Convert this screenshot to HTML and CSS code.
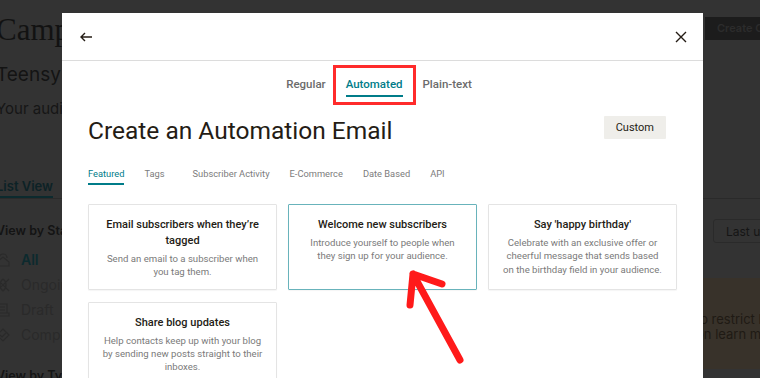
FILE: index.html
```html
<!DOCTYPE html>
<html lang="en">
<head>
    <meta charset="UTF-8">
    <meta name="viewport" content="width=device-width, initial-scale=1.0">
    <title>Campaigns</title>
    <link rel="stylesheet" href="styles.css">
</head>
<body>
    <div class="page">
        <header class="page-head">
            <h1>Campaigns</h1>
            <a class="btn-dark">Create Campaign</a>
        </header>
        <p class="org">Teensy Inc</p>
        <p class="audience">Your audience has 1 contact.</p>
        <nav class="views">
            <span class="view active">List View</span>
            <span class="view">Calendar View</span>
        </nav>
        <div class="content">
            <aside class="sidebar">
                <h4>View by Status</h4>
                <ul class="status-list">
                    <li class="active">
                        <svg width="14" height="14" viewBox="0 0 14 14"><path d="M1 9 L7 4 L13 9 V13 H1 Z M3 5 A4 4 0 0 1 11 5" fill="none" stroke="currentColor" stroke-width="1.2"/></svg>
                        All
                    </li>
                    <li>
                        <svg width="14" height="14" viewBox="0 0 14 14"><path d="M1 1 C5 5 9 9 13 13 M13 1 C9 5 5 9 1 13 M7 1 C11 4 11 10 7 13 C3 10 3 4 7 1" fill="none" stroke="currentColor" stroke-width="1.2"/></svg>
                        Ongoing
                    </li>
                    <li>
                        <svg width="14" height="14" viewBox="0 0 14 14"><path d="M2 1 H11 V10 M4 4 H9 M4 7 H9 M1 10 H13 V13 H1 Z" fill="none" stroke="currentColor" stroke-width="1.2"/></svg>
                        Draft
                    </li>
                    <li>
                        <svg width="14" height="14" viewBox="0 0 14 14"><path d="M7 1 L13 7 L7 13 L1 7 Z M4 7 L6 9 L10 5" fill="none" stroke="currentColor" stroke-width="1.2"/></svg>
                        Complete
                    </li>
                </ul>
                <h4>View by Type</h4>
            </aside>
            <main class="list">
                <div class="toolbar">
                    <button class="btn-outline">Last updated</button>
                </div>
                <div class="notice">
                    <p>to restrict how campaigns are shown,</p>
                    <p>on learn more about filters.</p>
                </div>
            </main>
        </div>
    </div>

    <div class="modal">
        <div class="modal-head">
            <svg class="icon" width="14" height="12" viewBox="0 0 14 12">
                <path d="M2 6 H13 M6 2 L2 6 L6 10" fill="none" stroke="#241c15" stroke-width="1.4"/>
            </svg>
            <svg class="icon" width="12" height="12" viewBox="0 0 12 12">
                <path d="M1 1 L11 11 M11 1 L1 11" fill="none" stroke="#241c15" stroke-width="1.4"/>
            </svg>
        </div>
        <div class="modal-body">
            <div class="mode-tabs">
                <span class="mode-tab">Regular</span>
                <span class="mode-tab active marked">Automated</span>
                <span class="mode-tab">Plain-text</span>
            </div>
            <div class="title-row">
                <h2>Create an Automation Email</h2>
                <button class="btn-custom">Custom</button>
            </div>
            <div class="sub-tabs">
                <span class="sub-tab active">Featured</span>
                <span class="sub-tab wide">Tags</span>
                <span class="sub-tab">Subscriber Activity</span>
                <span class="sub-tab">E-Commerce</span>
                <span class="sub-tab">Date Based</span>
                <span class="sub-tab">API</span>
            </div>
            <div class="cards">
                <div class="card">
                    <h3>Email subscribers when they’re tagged</h3>
                    <p>Send an email to a subscriber when you tag them.</p>
                </div>
                <div class="card selected">
                    <h3>Welcome new subscribers</h3>
                    <p>Introduce yourself to people when they&nbsp;sign up for your audience.</p>
                </div>
                <div class="card">
                    <h3>Say 'happy birthday'</h3>
                    <p>Celebrate with an exclusive offer or cheerful message that sends based on the birthday field in your audience.</p>
                </div>
                <div class="card">
                    <h3>Share blog updates</h3>
                    <p>Help contacts keep up with your blog by sending new posts straight to their inboxes.</p>
                </div>
            </div>
        </div>
        <!-- annotation arrow -->
        <svg class="pointer" width="641" height="365" viewBox="0 0 641 365">
            <path d="M398 347 L351 261 M348 292 L351 261 L380 271" fill="none" stroke="#ff1a1a" stroke-width="7" stroke-linecap="round" stroke-linejoin="round"/>
        </svg>
    </div>
</body>
</html>
```

FILE: styles.css
```css
body {
    margin: 0;
    background-color: #333;
    font-family: Inter, "Open Sans", sans-serif;
    overflow: hidden;
    height: 378px;
}

/* page behind the dialog, already dimmed */
.page {
    width: 900px;
    margin-left: -4px;
    color: #141414;
}
.page-head {
    display: flex;
    justify-content: space-between;
    align-items: flex-start;
    padding-top: 12px;
}
.page-head h1 {
    margin: 0;
    font-family: "Liberation Serif", serif;
    font-weight: 400;
    font-size: 31px;
    line-height: 36px;
    color: #121212;
}
.btn-dark {
    box-sizing: border-box;
    width: 191px;
    margin-top: 5px;
    padding: 0 12px;
    height: 23px;
    line-height: 23px;
    background-color: #1c1c1c;
    color: #2c2c2c;
    font-size: 11px;
    font-weight: 600;
}
.org {
    margin: 15px 0 0;
    font-size: 19px;
    line-height: 24px;
    color: #141414;
}
.audience {
    margin: 12px 0 0;
    font-size: 15px;
    line-height: 20px;
    color: #161616;
}
.views {
    display: flex;
    gap: 22px;
    margin-top: 58px;
    border-bottom: 1px solid #2a2a2a;
}
.view {
    font-size: 13px;
    line-height: 18px;
    padding-bottom: 1px;
    color: #161616;
}
.view.active {
    color: #0c2226;
    font-weight: 600;
    border-bottom: 2px solid #0c2a2e;
}
.content {
    display: flex;
}
.sidebar {
    flex-shrink: 0;
    width: 200px;
    padding-top: 24px;
}
.sidebar h4 {
    margin: 0;
    font-size: 12.5px;
    line-height: 16px;
    font-weight: 600;
    color: #141414;
}
.status-list {
    list-style: none;
    margin: 8px 0 21px;
    padding: 0;
}
.status-list li {
    display: flex;
    align-items: center;
    gap: 11px;
    height: 25px;
    font-size: 14px;
    color: #2a2a2a;
}
.status-list li svg {
    color: #2a2a2a;
}
.status-list li.active {
    color: #0c2a2e;
    font-weight: 600;
}
.list {
    flex: 1;
    min-width: 0;
}
.toolbar {
    display: flex;
    justify-content: flex-end;
    padding-top: 20px;
}
.btn-outline {
    width: 180px;
    height: 24px;
    margin-right: 3px;
    background: none;
    border: 1px solid #2a2a2a;
    border-radius: 3px;
    color: #151515;
    font-family: inherit;
    font-size: 12px;
    text-align: left;
    padding-left: 12px;
}
.notice {
    margin-top: 35px;
    height: 91px;
    background-color: #38322a;
    padding: 34px 0 0 500px;
    box-sizing: border-box;
    overflow: hidden;
}
.notice p {
    margin: 0;
    white-space: nowrap;
    font-size: 13px;
    line-height: 15px;
    color: #1f1a14;
}

/* dialog */
.modal {
    position: fixed;
    top: 13px;
    left: 62px;
    width: 641px;
    height: 380px;
    background-color: #fff;
    color: #241c15;
    font-family: Roboto, "Liberation Sans", sans-serif;
}
.modal-head {
    height: 47px;
    display: flex;
    justify-content: space-between;
    align-items: center;
    padding: 0 16px 0 17px;
    border-bottom: 1px solid #dcdcdc;
}
.modal-head .icon {
    display: block;
}
.modal-body {
    padding: 15px 25px 0 26px;
}
.mode-tabs {
    display: flex;
    justify-content: center;
    gap: 20px;
    margin-right: 8px;
}
.mode-tab {
    position: relative;
    font-size: 11.5px;
    line-height: 16px;
    font-weight: 500;
    color: #6b6b6b;
    padding-bottom: 3px;
    border-bottom: 2px solid transparent;
}
.mode-tab.active {
    color: #007c89;
    border-bottom-color: #007c89;
}
.mode-tab.marked::after {
    content: "";
    position: absolute;
    top: -11px;
    bottom: -10px;
    left: -13px;
    right: -13px;
    border: 3px solid #ff2b2b;
}
.title-row {
    display: flex;
    justify-content: space-between;
    align-items: flex-start;
    margin-top: 19px;
}
.title-row h2 {
    margin: 0;
    font-size: 24.5px;
    line-height: 30px;
    font-weight: 400;
    color: #241c15;
}
.btn-custom {
    margin-right: 12px;
    height: 23px;
    padding: 0 12px;
    border: none;
    border-radius: 1px;
    background-color: #efeeea;
    color: #241c15;
    font-family: inherit;
    font-size: 11px;
}
.sub-tabs {
    display: flex;
    gap: 20px;
    margin-top: 21px;
}
.sub-tab {
    font-size: 9.3px;
    line-height: 14px;
    color: #7c7c7c;
    padding-bottom: 2px;
    border-bottom: 2px solid transparent;
}
.sub-tab.wide {
    margin-right: 8px;
}
.sub-tab.active {
    color: #007c89;
    border-bottom-color: #007c89;
}
.cards {
    display: grid;
    grid-template-columns: repeat(3, 189px);
    column-gap: 11px;
    row-gap: 12px;
    margin-top: 19px;
}
.card {
    border: 1px solid #e4e4e4;
    border-radius: 1px;
    padding: 12px 12px 10px;
    text-align: center;
    box-shadow: 0 1px 1px rgba(0,0,0,0.04);
}
.card.selected {
    border-color: #68b3bb;
}
.card h3 {
    margin: 0;
    font-size: 11px;
    line-height: 16px;
    font-weight: 500;
    color: #241c15;
}
.card p {
    margin: 3px 0 0;
    font-size: 9.6px;
    line-height: 13.3px;
    color: #7a7a7a;
}
.pointer {
    position: absolute;
    left: 0;
    top: 0;
    pointer-events: none;
}
```
